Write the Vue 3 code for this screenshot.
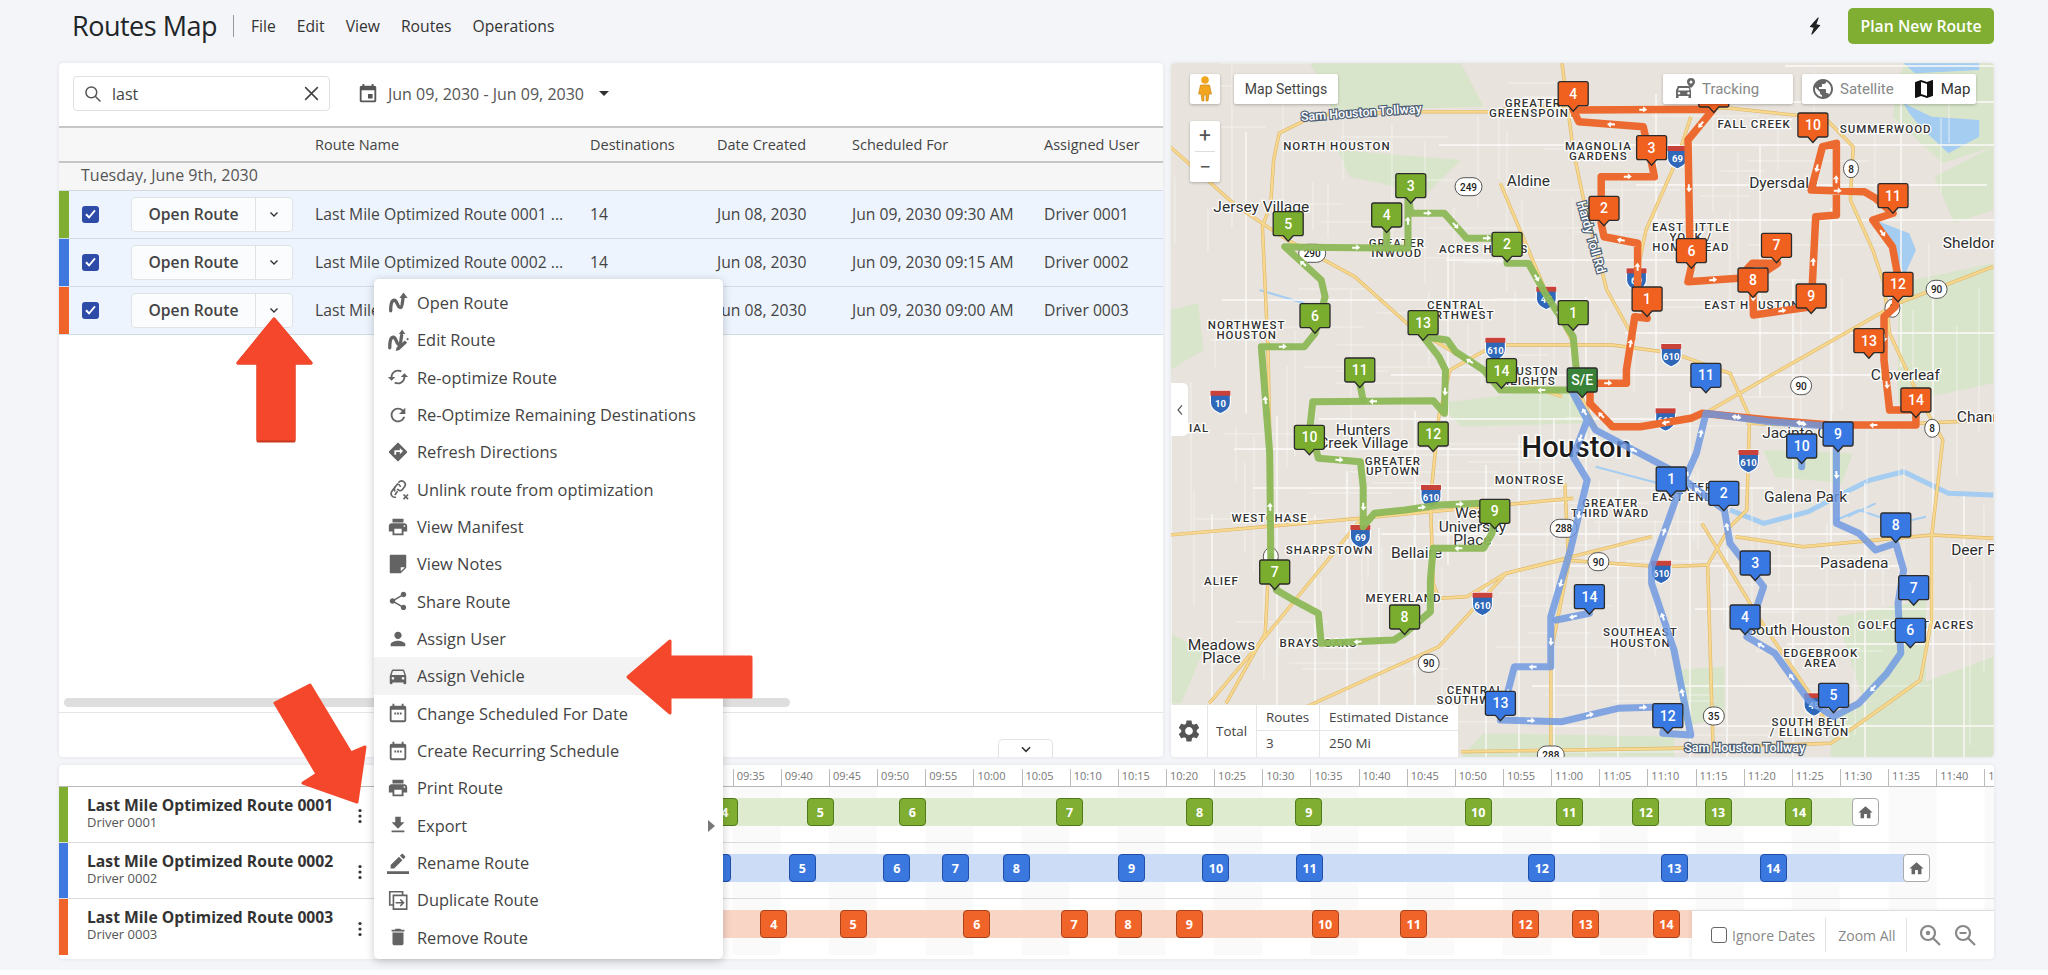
<script setup>
const P = (x, y) => [+(x * 0.56 - 1).toFixed(1), +(y / 3 - 13).toFixed(1)];
const line = (pts) => pts.map(([x, y]) => P(x, y).join(',')).join(' ');

let seed = 4711;
const rnd = () => (seed = (seed * 16807) % 2147483647) / 2147483647;
const streetPath = (n, w, h, vertical, minLen, extra) => {
  let d = '';
  for (let i = 0; i < n; i++) {
    const a = (i / n) * w + rnd() * 10;
    const b = rnd() * h * 0.75;
    const l = minLen + rnd() * extra;
    d += vertical ? `M${a.toFixed(0)} ${b.toFixed(0)}V${(b + l).toFixed(0)}` : `M${b.toFixed(0)} ${a.toFixed(0)}H${(b + l).toFixed(0)}`;
  }
  return d;
};
const majorStreets = streetPath(24, 823, 694, true, 220, 380) + streetPath(18, 694, 823, false, 220, 420);
const minorStreets = streetPath(80, 823, 694, true, 40, 130) + streetPath(70, 694, 823, false, 40, 150);

const highways = [
  [[185,330],[195,250],[260,195],[440,185],[575,185],[620,170],[720,175],[1000,175],[1170,205],[1220,290],[1215,450],[1255,600],[1275,700],[1285,850],[1340,1050],[1380,1170],[1360,1460],[1360,1710],[1340,1890],[1240,2010],[1180,2080],[900,2095],[520,2105]],
  [[185,330],[180,460],[165,530],[175,900],[180,1300],[175,1590],[170,1750],[100,1960]],
  [[700,40],[720,300],[740,460],[780,720],[830,870]],
  [[590,400],[670,720],[720,880],[735,1040],[760,1140]],
  [[0,290],[120,470],[210,570],[330,680],[430,830],[560,960],[700,1040]],
  [[0,1455],[340,1405],[720,1345]],
  [[1030,1120],[1200,1130],[1470,1110]],
  [[500,960],[580,885],[790,885],[900,910],[1000,970],[1035,1100],[1030,1380],[1000,1430],[960,1545],[880,1550],[700,1530],[600,1570],[530,1640],[480,1645],[470,1600],[465,1350],[480,1100],[500,960]],
  [[340,1410],[180,1740],[70,1960]],
  [[705,1300],[712,1540],[680,1810],[680,2110]],
  [[950,1420],[1050,1700],[1150,1950],[1175,2030]],
  [[960,1540],[970,2110]],
  [[860,1460],[600,1570],[480,1790],[270,1950],[180,2020]],
  [[930,200],[905,330],[850,540],[830,700]],
  [[1010,1460],[1130,1490],[1360,1455],[1470,1465]],
  [[1470,650],[1300,760],[1100,950],[960,1085]],
];

const parks = [
  [[0,780],[50,760],[60,900],[0,960]],
  [[1365,380],[1470,290],[1470,480],[1400,520]],
  [[1310,40],[1470,40],[1470,290],[1380,340],[1290,200]],
  [[1190,1700],[1350,1650],[1350,1900],[1240,1960]],
  [[1180,2000],[1470,1820],[1470,2120],[1180,2120]],
  [[250,40],[520,40],[560,170],[290,180]],
  [[0,1750],[60,1800],[20,1960],[0,1960]],
  [[560,2050],[900,2060],[900,2120],[520,2120]],
  [[900,1860],[990,1850],[990,2000],[920,2030]],
  [[1060,1200],[1220,1210],[1200,1300],[1080,1280]],
  [[480,1060],[720,1010],[740,1120],[520,1130]],
  [[300,300],[520,330],[460,430],[320,380]],
  [[1300,700],[1470,640],[1470,1000],[1300,1060]],
];
const waters = [
  [[1310,40],[1445,40],[1445,60],[1330,70]],
  [[1310,160],[1360,200],[1445,210],[1445,260],[1390,310],[1365,270],[1345,240],[1320,190]],
  [[1258,510],[1320,550],[1332,600],[1312,675],[1290,600]],
];
const channel = [[1000,1380],[1060,1420],[1140,1385],[1190,1340],[1250,1290],[1310,1265],[1390,1330],[1470,1335]];
const creeks = [
  [[1190,1410],[1230,1380],[1300,1420],[1350,1400]],
  [[160,720],[240,760]],
  [[760,1250],[850,1290],[920,1320]],
  [[1210,1400],[1260,1360]],
];

const color = { o: '#f0601f', g: '#7aac2e', b: '#3878e2', d: '#3a8238' };
const mk = (c, list) => list.map(([t, x, y]) => { const [a, b] = P(x, y); return { t: String(t), x: a, y: b, f: color[c] }; });
const markers = [
  ...mk('o', [[5,971,135],[4,720,131],[3,860,293],[2,775,475],[1,852,747],[6,931,602],[7,1083,586],[8,1041,690],[9,1145,738],[10,1148,225],[11,1291,437],[12,1300,703],[13,1248,872],[14,1332,1050]]),
  ...mk('g', [[3,430,407],[4,387,495],[5,211,521],[2,602,583],[1,720,788],[6,259,797],[13,452,818],[14,592,962],[11,339,960],[10,249,1162],[12,470,1152],[9,580,1384],[7,187,1566],[8,419,1701]]),
  ...mk('b', [[11,957,976],[9,1193,1152],[10,1128,1188],[1,895,1287],[2,989,1330],[8,1296,1425],[3,1045,1539],[7,1328,1613],[4,1027,1701],[6,1322,1741],[14,749,1640],[5,1185,1936],[12,889,1997],[13,590,1960]]),
  ...mk('d', [['S/E',736,990]]),
];

const routeData = [
  { c: '#8cb856', w: 7, o: 0.95, segs: [
    [[736,1020],[590,1020],[560,960],[510,905],[495,870],[452,860],[480,920],[492,960],[490,1090],[470,1052],[255,1055],[250,1130],[265,1225],[340,1235],[345,1310],[345,1430],[365,1390],[420,1380],[480,1365],[555,1360],[580,1400],[575,1450],[560,1495],[470,1495],[465,1590],[465,1685],[419,1750],[400,1770],[270,1780],[265,1690],[215,1645],[190,1620],[180,1530],[178,1210],[163,890],[240,890],[259,850],[277,740],[270,690],[205,590],[240,592],[425,595],[425,430],[430,490],[490,490],[530,565],[602,565],[602,640],[640,640],[670,730],[720,860],[725,950],[736,1020]],
    [[339,1000],[345,1052]],[[387,545],[387,595]],
  ] },
  { c: '#ec6a2f', w: 7.5, o: 1, segs: [
    [[750,1060],[750,1000],[815,1000],[815,960],[830,800],[852,805],[835,720],[835,580],[775,560],[770,520],[770,380],[865,380],[860,340],[845,230],[730,215],[720,180],[970,178],[925,270],[928,560],[931,650],[925,695],[1015,685],[1040,640],[1085,640],[1040,690],[1042,795],[1145,770],[1153,500],[1190,495],[1190,280],[1165,290],[1145,420],[1240,425],[1260,445],[1291,490],[1255,510],[1290,590],[1300,680],[1295,770],[1275,800],[1275,930],[1285,1080],[1332,1080],[1332,1125],[1180,1125],[1070,1110],[950,1090],[930,1105],[840,1130],[790,1130],[750,1060]],
  ] },
  { c: '#6b97e2', w: 7, o: 0.82, segs: [
    [[720,1030],[745,1110],[720,1220],[745,1290],[715,1500],[680,1700],[680,1850],[615,1850],[590,2010],[700,2015],[800,1975],[890,1970],[880,2050],[930,2055],[900,1800],[860,1600],[860,1550],[905,1340],[940,1210],[957,1090],[1070,1115],[1190,1130],[1190,1420],[1230,1450],[1260,1500],[1296,1480],[1310,1560],[1300,1660],[1305,1810],[1280,1870],[1230,1960],[1185,2000],[1140,1950],[1080,1810],[1030,1760],[1060,1610],[1000,1480],[990,1380],[895,1260],[760,1140],[720,1030]],
    [[749,1690],[690,1710]],[[1128,1190],[1128,1250]],
  ] },
];
const routes = routeData.flatMap((r) => r.segs.map((s) => ({ c: r.c, w: r.w, o: r.o, pts: line(s) })));
const routeArrows = routeData.flatMap((r) => r.segs.flatMap((s) => {
  const out = [];
  for (let i = 0; i < s.length - 1; i++) {
    const [ax, ay] = P(...s[i]);
    const [bx, by] = P(...s[i + 1]);
    if (Math.hypot(bx - ax, by - ay) > 32) out.push({ x: (ax + bx) / 2, y: (ay + by) / 2, a: (Math.atan2(by - ay, bx - ax) * 180) / Math.PI });
  }
  return out;
}));

const placeLabel = (t, x, y, a) => { const [m, n] = P(x, y); return { t, x: m, y: n + 5, a: a || 'middle' }; };
const places = [
  ['Jersey Village',163,470],['Aldine',640,392],['Dyersdale',1095,398],['Sheldon',1430,580],['Channelview',1405,1100,'start'],['Cloverleaf',1313,975],
  ['Hunters',345,1140],['Creek Village',345,1180],['Meadows',92,1785],['Place',92,1825],['Bellaire',440,1510],['West',540,1390],['University',540,1430],['Place',540,1470],
  ['Galena Park',1135,1340],['Pasadena',1222,1540],['South Houston',1122,1740],['Deer Park',1395,1500,'start'],['Jacinto City',1130,1148],
].map((p) => placeLabel(...p));
const areas = [
  ['NORTH HOUSTON',298,289],['GREATER',648,160],['GREENSPOINT',648,190],['MAGNOLIA',765,287],['GARDENS',765,317],['FALL CREEK',1043,222],['SUMMERWOOD',1278,237],
  ['GREATER',405,578],['INWOOD',405,608],['ACRES HOMES',560,598],['EAST LITTLE',930,530],['YORK /',930,560],['HOMESTEAD',930,590],['NORTHWEST',137,825],['HOUSTON',137,855],
  ['CENTRAL',510,766],['NORTHWEST',510,796],['EAST HOUSTON',1040,765],['HOUSTON',640,962],['HEIGHTS',640,992],['GREATER',398,1232],['UPTOWN',398,1262],['MONTROSE',642,1289],
  ['WESTCHASE',178,1405],['SHARPSTOWN',285,1500],['ALIEF',92,1593],['MEYERLAND',417,1645],['BRAYS OAKS',265,1780],['GREATER',786,1358],['THIRD WARD',786,1388],
  ['SOUTHEAST',840,1747],['HOUSTON',840,1778],['GREATER',920,1310],['EAST END',915,1340],['EDGEBROOK',1162,1810],['AREA',1162,1840],['GOLFCREST ACRES',1332,1725],
  ['CENTRAL',545,1919],['SOUTHWEST',545,1949],['SOUTH BELT',1142,2015],['/ ELLINGTON',1142,2045],['MEMORIAL',10,1135],
].map((p) => { const l = placeLabel(...p); return { ...l, y: l.y - 1 }; });
const [hx, hy] = P(726, 1222);
const [t1x, t1y] = P(342, 200);
const [t2x, t2y] = P(1026, 2105);
const [hrx, hry] = P(745, 565);

const interstates = [[69,906,318],[45,672,740],[610,581,893],[610,895,912],[10,90,1052],[610,466,1335],[69,340,1455],[610,558,1658],[610,877,1562],[610,1033,1230],[45,1150,1960],[610,885,1105],[69,833,685]]
  .map(([t, x, y]) => { const [a, b] = P(x, y); return { t, x: a, y: b }; });
const shields = [[290,254,610],[249,533,410],[90,1369,718],[90,1127,1007],[8,1216,356],[8,1361,1135],[288,703,1435],[90,765,1535],[90,462,1840],[35,971,1998],[288,680,2115],[8,180,1520],[8,1290,775]]
  .map(([t, x, y]) => { const [a, b] = P(x, y); return { t: String(t), x: a, y: b, w: String(t).length * 6 + 9 }; });

const columns = ['Route Name', 'Destinations', 'Date Created', 'Scheduled For', 'Assigned User'];
const rows = [
  { c: '#7fae33', n: 'Last Mile Optimized Route 0001 ...', s: 'Jun 09, 2030 09:30 AM', u: 'Driver 0001' },
  { c: '#3f79e0', n: 'Last Mile Optimized Route 0002 ...', s: 'Jun 09, 2030 09:15 AM', u: 'Driver 0002' },
  { c: '#f0642a', n: 'Last Mile Optimized Route 0003 ...', s: 'Jun 09, 2030 09:00 AM', u: 'Driver 0003' },
];

const print = 'M19 8H5c-1.66 0-3 1.34-3 3v6h4v4h12v-4h4v-6c0-1.66-1.34-3-3-3zm-3 11H8v-5h8v5zm3-7c-.55 0-1-.45-1-1s.45-1 1-1 1 .45 1 1-.45 1-1 1zm-1-9H6v4h12V3z';
const cal = 'M5 4h1V2h2v2h8V2h2v2h1c1.1 0 2 .9 2 2v14c0 1.1-.9 2-2 2H5c-1.1 0-2-.9-2-2V6c0-1.1.9-2 2-2zm0 4.500v11.500h14V8.500H5zm3 3h2v2H8zm3 0h2v2h-2zm3 0h2v2h-2z';
const squiggleA = 'M4 20.500C4 13 5 9 8 9c3 0 3.500 8 6.500 8C17 17 16.500 11 17.500 7';
const squiggleB = 'M3 20.500C3 13 4 9 7 9c3 0 3.500 8 6 8C15.500 17 15 11 16 7';
const menu = [
  { t: 'Open Route', s: squiggleA, d: 'M18 .5l4.500 6h-9z' },
  { t: 'Edit Route', s: squiggleB, d: 'M16.500 .5l3.500 5h-7zM22.500 9.500l1.500 1.500-1.500 1.500-1.500-1.500zM19.500 12.500l2.500 2.500-8.500 8-4 1 1-4z' },
  { t: 'Re-optimize Route', d: 'M19 8l-4 4h3c0 3.310-2.690 6-6 6-1.010 0-1.970-.25-2.800-.7l-1.460 1.460C8.970 19.540 10.430 20 12 20c4.420 0 8-3.580 8-8h3l-4-4zM6 12c0-3.310 2.690-6 6-6 1.010 0 1.970.25 2.800.7l1.460-1.460C15.030 4.460 13.570 4 12 4c-4.420 0-8 3.580-8 8H1l4 4 4-4H6z' },
  { t: 'Re-Optimize Remaining Destinations', d: 'M17.65 6.35C16.2 4.9 14.21 4 12 4c-4.42 0-7.99 3.58-7.99 8s3.57 8 7.99 8c3.73 0 6.84-2.55 7.73-6h-2.08c-.82 2.33-3.04 4-5.65 4-3.31 0-6-2.69-6-6s2.69-6 6-6c1.66 0 3.14.69 4.22 1.78L13 11h7V4l-2.35 2.35z' },
  { t: 'Refresh Directions', d: 'M21.71 11.29l-9-9c-.39-.39-1.02-.39-1.41 0l-9 9c-.39.39-.39 1.02 0 1.41l9 9c.39.39 1.02.39 1.41 0l9-9c.39-.38.39-1.01 0-1.41zM14 14.5V12h-4v3H8v-4c0-.55.45-1 1-1h5V7.5l3.500 3.500-3.500 3.500z' },
  { t: 'Unlink route from optimization', s: 'M9 21a4 4 0 0 1-4-6l2.500-3.500M9 18l2-3M13 4.500a4 4 0 0 1 6.500 4.500l-3 4a4 4 0 0 1-5-.5M8.500 14a4 4 0 0 1 1-5l2-2.500a4 4 0 0 1 3 2.500', x: 'M18 18l5 5M23 18l-5 5' },
  { t: 'View Manifest', d: print },
  { t: 'View Notes', d: 'M4 2h16a1 1 0 0 1 1 1v13l-6 6H4a1 1 0 0 1-1-1V3a1 1 0 0 1 1-1zM15 20v-4.500h4.500z' },
  { t: 'Share Route', d: 'M18 16.08c-.76 0-1.44.3-1.96.77L8.91 12.7c.05-.23.09-.46.09-.7s-.04-.47-.09-.7l7.05-4.11c.54.5 1.25.81 2.04.81 1.66 0 3-1.34 3-3s-1.34-3-3-3-3 1.34-3 3c0 .24.04.47.09.7L8.04 9.81C7.5 9.31 6.79 9 6 9c-1.66 0-3 1.34-3 3s1.34 3 3 3c.79 0 1.5-.31 2.04-.81l7.12 4.16c-.05.21-.08.43-.08.65 0 1.61 1.31 2.92 2.92 2.92 1.61 0 2.92-1.31 2.92-2.92s-1.31-2.92-2.92-2.92z' },
  { t: 'Assign User', d: 'M12 12c2.21 0 4-1.79 4-4s-1.79-4-4-4-4 1.79-4 4 1.79 4 4 4zm0 2c-2.67 0-8 1.34-8 4v2h16v-2c0-2.66-5.33-4-8-4z' },
  { t: 'Assign Vehicle', d: 'M18.92 6.010C18.72 5.42 18.16 5 17.5 5h-11c-.66 0-1.21.42-1.42 1.010L3 12v8c0 .55.45 1 1 1h1c.55 0 1-.45 1-1v-1h12v1c0 .55.45 1 1 1h1c.55 0 1-.45 1-1v-8l-2.08-5.990zM6.500 16c-.83 0-1.500-.67-1.500-1.500S5.670 13 6.500 13s1.500.67 1.500 1.500S7.330 16 6.500 16zm11 0c-.83 0-1.500-.67-1.500-1.500s.67-1.500 1.500-1.500 1.500.67 1.500 1.500-.67 1.500-1.500 1.500zM5 11l1.500-4.500h11L19 11H5z', hover: true },
  { t: 'Change Scheduled For Date', d: cal },
  { t: 'Create Recurring Schedule', d: cal },
  { t: 'Print Route', d: print },
  { t: 'Export', d: 'M19 9h-4V3H9v6H5l7 7 7-7zM5 18v2h14v-2H5z', sub: true },
  { t: 'Rename Route', d: 'M24 24H0v-3h24v3zM13.060 5.190l3.750 3.750L7.750 18H4v-3.750l9.060-9.060zm4.820 2.680l-3.750-3.750 1.830-1.830c.39-.39 1.020-.39 1.410 0l2.340 2.340c.39.39.39 1.020 0 1.410l-1.830 1.830z' },
  { t: 'Duplicate Route', s: 'M6 17.500H3V3h14v3M7 7h14.500v15H7zM10 15h8M15 12l3 3-3 3' },
  { t: 'Remove Route', d: 'M6 19c0 1.100.9 2 2 2h8c1.100 0 2-.9 2-2V7H6v12zM19 4h-3.500l-1-1h-5l-1 1H5v2h14V4z' },
];

const ticks = [];
for (let h = 9, m = 35; ticks.length < 27; m += 5) {
  if (m === 60) { h += 1; m = 0; }
  ticks.push(`${String(h).padStart(2, '0')}:${String(m).padStart(2, '0')}`);
}
const toLeft = (z) => +(700 + z / 1.163 - 374 - 13.5).toFixed(1);
const tlRow = (name, driver, strip, bar, chip, edge, end, chips, home) => ({
  name, driver, strip, bar, chip, edge,
  barW: +(700 + end / 1.163 - 374).toFixed(1),
  chips: chips.map(([t, z]) => ({ t, x: toLeft(z) })),
  home: home ? toLeft(home) : null,
});
const tlRows = [
  tlRow('Last Mile Optimized Route 0001', 'Driver 0001', '#7fae33', '#dfebce', '#7fae33', '#4f7a1c', 1355,
    [[4,29],[5,140],[6,247],[7,430],[8,581],[9,708],[10,905],[11,1011],[12,1100],[13,1184],[14,1278]], 1355),
  tlRow('Last Mile Optimized Route 0002', 'Driver 0002', '#3f79e0', '#ccdcf6', '#3a78e0', '#1e4fa8', 1415,
    [[4,20],[5,119],[6,229],[7,297],[8,368],[9,502],[10,600],[11,709],[12,979],[13,1133],[14,1248]], 1415),
  tlRow('Last Mile Optimized Route 0003', 'Driver 0003', '#f0642a', '#f9d5c5', '#f0642a', '#a8431a', 1170,
    [[4,86],[5,178],[6,322],[7,435],[8,498],[9,569],[10,727],[11,830],[12,960],[13,1030],[14,1124]], null),
];
</script>

<template>
  <div class="page">
    <header class="topbar">
      <h1 class="title">Routes Map</h1>
      <span class="title-sep"></span>
      <nav class="nav">
        <span>File</span><span>Edit</span><span>View</span><span>Routes</span><span>Operations</span>
      </nav>
      <span class="grow"></span>
      <svg class="bolt" viewBox="0 0 24 24"><path d="M11 21h-1l1-7H7.500c-.58 0-.57-.32-.38-.66.19-.34.05-.08.07-.12C8.480 10.940 10.420 7.540 13 3h1l-1 7h3.500c.49 0 .56.33.47.51l-.07.15C12.960 17.550 11 21 11 21z"/></svg>
      <button class="plan">Plan New Route</button>
    </header>

    <div class="main">
      <section class="list card">
        <div class="toolbar">
          <div class="search">
            <svg class="search-ico" viewBox="0 0 24 24"><circle cx="10" cy="10" r="6.500"/><path d="M15 15l6 6"/></svg>
            <span class="search-text">last</span>
            <svg class="search-x" viewBox="0 0 24 24"><path d="M4 4l16 16M20 4L4 20"/></svg>
          </div>
          <div class="range">
            <svg class="cal" viewBox="0 0 24 24"><path fill-rule="evenodd" d="M17 12h-5v5h5v-5zM16 1v2H8V1H6v2H5c-1.110 0-1.990.9-1.990 2L3 19c0 1.100.89 2 2 2h14c1.100 0 2-.9 2-2V5c0-1.100-.9-2-2-2h-1V1h-2zm3 18H5V8h14v11z"/></svg>
            <span>Jun 09, 2030 - Jun 09, 2030</span>
            <i class="caret"></i>
          </div>
        </div>

        <div class="grid head">
          <span></span><span></span><span></span>
          <span v-for="c in columns" :key="c">{{ c }}</span>
        </div>
        <div class="group">Tuesday, June 9th, 2030</div>

        <div v-for="r in rows" :key="r.n" class="grid row">
          <span class="strip" :style="{ background: r.c }"></span>
          <span class="check">
            <svg viewBox="0 0 16 18"><path d="M6.500 13.500L2.500 9.500l1.500-1.500 2.500 2.500 5.500-6.500 1.500 1.400z"/></svg>
          </span>
          <div class="split">
            <span class="split-main">Open Route</span>
            <span class="split-caret"><svg viewBox="0 0 12 12"><path d="M2.500 4.500L6 8l3.500-3.500"/></svg></span>
          </div>
          <span>{{ r.n }}</span><span>14</span><span>Jun 08, 2030</span><span>{{ r.s }}</span><span>{{ r.u }}</span>
        </div>

        <div class="grow"></div>
        <div class="scrollbar"></div>
        <div class="list-foot">
          <span class="foot-tab"><svg viewBox="0 0 12 12"><path d="M2.500 4.500L6 8l3.500-3.500"/></svg></span>
        </div>
      </section>

      <section class="map card">
        <svg class="map-svg" viewBox="0 0 823 694" width="823" height="694">
          <rect width="823" height="694" fill="#e8e3dc"/>
          <polygon v-for="(p, i) in parks" :key="'pk' + i" :points="line(p)" fill="#d9e5cb"/>
          <polygon v-for="(p, i) in waters" :key="'w' + i" :points="line(p)" fill="#a5cdf2"/>
          <polyline :points="line(channel)" fill="none" stroke="#a5cdf2" stroke-width="5"/>
          <polyline v-for="(p, i) in creeks" :key="'cr' + i" :points="line(p)" fill="none" stroke="#a5cdf2" stroke-width="2"/>
          <path :d="minorStreets" stroke="#f6f4f0" stroke-width="0.8" fill="none"/>
          <path :d="majorStreets" stroke="#fbfaf8" stroke-width="1.400" fill="none"/>
          <polyline v-for="(p, i) in highways" :key="'he' + i" :points="line(p)" fill="none" stroke="#e0b768" stroke-width="3.400" stroke-linejoin="round"/>
          <polyline v-for="(p, i) in highways" :key="'h' + i" :points="line(p)" fill="none" stroke="#f6d88f" stroke-width="2.200" stroke-linejoin="round"/>

          <text v-for="(l, i) in areas" :key="'a' + i" class="area" :x="l.x" :y="l.y" text-anchor="middle">{{ l.t }}</text>
          <text v-for="(l, i) in places" :key="'p' + i" class="place" :x="l.x" :y="l.y" :text-anchor="l.a">{{ l.t }}</text>
          <text class="city" :x="hx" :y="hy" text-anchor="middle">Houston</text>
          <text class="toll" :transform="`translate(${t1x} ${t1y}) rotate(-4)`" text-anchor="middle">Sam Houston Tollway</text>
          <text class="toll" :transform="`translate(${t2x} ${t2y})`" text-anchor="middle">Sam Houston Tollway</text>
          <text class="toll" :transform="`translate(${hrx} ${hry}) rotate(74)`" text-anchor="middle">Hardy Toll Rd</text>

          <g v-for="(s, i) in interstates" :key="'i' + i" :transform="`translate(${s.x} ${s.y})`">
            <path d="M-10-10h20v12c0 6-5 9-10 11-5-2-10-5-10-11z" fill="#2f68b8" stroke="#fff" stroke-width="1.200"/>
            <path d="M-10-10h20v5h-20z" fill="#c8423a"/>
            <text class="ishield" y="6" text-anchor="middle">{{ s.t }}</text>
          </g>
          <g v-for="(s, i) in shields" :key="'s' + i" :transform="`translate(${s.x} ${s.y})`">
            <rect :x="-s.w / 2" y="-9" :width="s.w" height="18" rx="9" fill="#fff" stroke="#555" stroke-width="1"/>
            <text class="sshield" y="4" text-anchor="middle">{{ s.t }}</text>
          </g>

          <polyline v-for="(r, i) in routes" :key="'r' + i" :points="r.pts" fill="none" :stroke="r.c" :stroke-width="r.w" :opacity="r.o" stroke-linejoin="round" stroke-linecap="round"/>
          <path v-for="(a, i) in routeArrows" :key="'ra' + i" :transform="`translate(${a.x} ${a.y}) rotate(${a.a})`" d="M-4-1h4v-2.500L4 0 0 2.500V1h-4z" fill="#fff"/>

          <g v-for="(m, i) in markers" :key="'m' + i" :transform="`translate(${m.x} ${m.y})`">
            <path d="M-13-12h26a2 2 0 0 1 2 2v20a2 2 0 0 1-2 2H5l-5 5.500L-5 12h-8a2 2 0 0 1-2-2v-20a2 2 0 0 1 2-2z" :fill="m.f" stroke="#2b2b2b" stroke-width="1.300"/>
            <text class="mtext" y="5" text-anchor="middle">{{ m.t }}</text>
          </g>
        </svg>

        <div class="mctl peg">
          <svg viewBox="0 0 16 28" width="16" height="28"><circle cx="8" cy="5" r="3.800" fill="#f2a51f"/><path d="M3.500 10h9l2 9h-2.500L11 26H9v-6H7v6H5l-1-7H1.500z" fill="#f2a51f" stroke="#c47d14" stroke-width=".6"/></svg>
        </div>
        <div class="mctl settings">Map Settings</div>
        <div class="mctl zoomctl">
          <span>+</span><i></i><span>−</span>
        </div>
        <div class="mctl tracking">
          <svg viewBox="0 0 24 24" width="24" height="24"><path fill="#666" fill-rule="evenodd" d="M17.500 9l1.500 4.500V21h-2.500v-2h-10v2H4v-7.500L5.800 9zM7 11l-1 2.500h11.500l-.8-2.500zM7 15a1.300 1.300 0 1 0 0 2.600A1.300 1.300 0 0 0 7 15zm9.500 0a1.300 1.300 0 1 0 0 2.600 1.300 1.300 0 0 0 0-2.600zM19 1a4 4 0 0 1 4 4c0 2.500-4 6-4 6s-4-3.500-4-6a4 4 0 0 1 4-4zm0 2.500a1.500 1.500 0 1 0 0 3 1.500 1.500 0 0 0 0-3z"/></svg>
          <span>Tracking</span>
        </div>
        <div class="mctl maptype">
          <svg viewBox="0 0 24 24" width="24" height="24"><path fill="#666" fill-rule="evenodd" d="M12 2C6.480 2 2 6.480 2 12s4.480 10 10 10 10-4.480 10-10S17.520 2 12 2zm-1 17.930c-3.950-.49-7-3.850-7-7.930 0-.62.08-1.210.21-1.790L9 15v1c0 1.100.9 2 2 2v1.930zm6.900-2.540c-.26-.81-1-1.390-1.900-1.390h-1v-3c0-.55-.45-1-1-1H8v-2h2c.55 0 1-.45 1-1V7h2c1.100 0 2-.9 2-2v-.41c2.930 1.190 5 4.060 5 7.410 0 2.080-.8 3.970-2.100 5.390z"/></svg>
          <span class="sat">Satellite</span>
          <svg class="map-ico" viewBox="0 0 24 24" width="24" height="24"><path fill="#111" fill-rule="evenodd" d="M20.500 3l-.16.03L15 5.100 9 3 3.360 4.900c-.21.07-.36.25-.36.48V20.500c0 .28.22.5.5.5l.16-.03L9 18.900l6 2.100 5.640-1.900c.21-.07.36-.25.36-.48V3.500c0-.28-.22-.5-.5-.5zM15 19l-6-2.110V5l6 2.110V19z"/></svg>
          <span>Map</span>
        </div>
        <div class="collapse">
          <svg viewBox="0 0 12 20" width="8" height="14"><path d="M9 3l-6 7 6 7" fill="none" stroke="#555" stroke-width="1.800"/></svg>
        </div>
        <div class="totals">
          <div class="t-gear"><svg viewBox="0 0 24 24" width="26" height="26"><path fill="#555" fill-rule="evenodd" d="M19.140 12.940c.04-.3.06-.61.06-.94 0-.32-.02-.64-.07-.94l2.030-1.580c.18-.14.23-.41.12-.61l-1.920-3.320c-.12-.22-.37-.29-.59-.22l-2.390.96c-.5-.38-1.030-.7-1.620-.94l-.36-2.540c-.04-.24-.24-.41-.48-.41h-3.840c-.24 0-.43.17-.47.41l-.36 2.540c-.59.24-1.130.57-1.620.94l-2.390-.96c-.22-.08-.47 0-.59.22L2.740 8.870c-.12.21-.08.47.12.61l2.030 1.580c-.05.3-.09.63-.09.94s.02.64.07.94l-2.030 1.580c-.18.14-.23.41-.12.61l1.920 3.320c.12.22.37.29.59.22l2.390-.96c.5.38 1.030.7 1.620.94l.36 2.540c.05.24.24.41.48.41h3.840c.24 0 .44-.17.47-.41l.36-2.540c.59-.24 1.130-.56 1.620-.94l2.390.96c.22.08.47 0 .59-.22l1.920-3.320c.12-.22.07-.47-.12-.61l-2.010-1.580zM12 15.600c-1.980 0-3.600-1.620-3.600-3.600s1.620-3.600 3.600-3.600 3.600 1.620 3.600 3.600-1.620 3.600-3.600 3.600z"/></svg></div>
          <div class="t-total">Total</div>
          <div class="t-col"><span>Routes</span><span>3</span></div>
          <div class="t-col wide"><span>Estimated Distance</span><span>250 Mi</span></div>
        </div>
      </section>
    </div>

    <section class="bottom card">
      <div class="names">
        <div class="names-head"></div>
        <div v-for="r in tlRows" :key="r.name" class="name-row">
          <span class="strip" :style="{ background: r.strip }"></span>
          <div class="name-text">
            <strong>{{ r.name }}</strong>
            <small>{{ r.driver }}</small>
          </div>
          <svg class="kebab" viewBox="0 0 6 18" width="6" height="18"><circle cx="3" cy="3.500" r="1.600"/><circle cx="3" cy="9" r="1.600"/><circle cx="3" cy="14.500" r="1.600"/></svg>
        </div>
      </div>
      <div class="timeline">
        <div class="ticks">
          <span v-for="t in ticks" :key="t" class="tick">{{ t }}</span>
        </div>
        <div v-for="r in tlRows" :key="r.name" class="tl-row">
          <div class="tl-bar" :style="{ width: r.barW + 'px', background: r.bar }"></div>
          <span v-for="c in r.chips" :key="c.t" class="chip" :style="{ left: c.x + 'px', background: r.chip, borderColor: r.edge }">{{ c.t }}</span>
          <span v-if="r.home !== null" class="chip home" :style="{ left: r.home + 'px' }">
            <svg viewBox="0 0 24 24" width="17" height="17"><path d="M10 20v-6h4v6h5v-8h3L12 3 2 12h3v8z" fill="#666"/></svg>
          </span>
        </div>
      </div>
      <div class="zoombox">
        <span class="zb-check"></span>
        <span class="zb-label">Ignore Dates</span>
        <i></i>
        <span class="zb-all">Zoom All</span>
        <i></i>
        <svg viewBox="0 0 24 24" width="24" height="24"><circle cx="10" cy="10" r="7"/><path d="M15 15l7 7"/><circle cx="10" cy="10" r="2.200" class="fill"/></svg>
        <svg viewBox="0 0 24 24" width="24" height="24"><circle cx="10" cy="10" r="7"/><path d="M15 15l7 7M6.500 10h7"/></svg>
      </div>
    </section>

    <div class="ctx">
      <div v-for="m in menu" :key="m.t" class="ctx-item" :class="{ hover: m.hover }">
        <svg class="ctx-ico" viewBox="0 0 24 24">
          <path v-if="m.d" :d="m.d" fill="#636363" fill-rule="evenodd"/>
          <path v-if="m.s" :d="m.s" fill="none" stroke="#636363" stroke-linecap="round" :stroke-width="m.t === 'Open Route' || m.t === 'Edit Route' ? 3.600 : 1.800"/>
          <path v-if="m.x" :d="m.x" fill="none" stroke="#636363" stroke-width="1.800"/>
        </svg>
        <span>{{ m.t }}</span>
        <i v-if="m.sub" class="ctx-sub"></i>
      </div>
    </div>

    <svg class="arrows" viewBox="0 0 2048 975" width="2048" height="975">
      <g fill="#f4472b" stroke="#f4472b" stroke-width="3" stroke-linejoin="round">
        <polygon class="a-shadow" points="274,319 311,363 294,363 294,441 258,441 258,363 238,363" />
        <polygon points="274,319 311,363 294,363 294,439 258,439 258,363 238,363" />
        <polygon points="628,677 670,641 670,657 751,657 751,697 670,697 670,713" />
        <polygon points="275,703 310,685 351,753 365,747 357,802 303,783 317,774" />
      </g>
    </svg>
  </div>
</template>

<style>
html, body { margin: 0; background: #fff; }
</style>

<style scoped>
* { box-sizing: border-box; }
.page {
  position: relative;
  width: 2048px;
  height: 970px;
  overflow: hidden;
  padding: 0 54px 0 59px;
  background: #f4f5f8;
  font-family: "Open Sans", "Liberation Sans", sans-serif;
  color: #444;
}
.grow { flex: 1; }
.card { background: #fff; border-radius: 4px; box-shadow: 0 0 4px rgba(0, 0, 0, .08); }

.topbar { display: flex; align-items: center; height: 63px; padding-left: 13px; padding-bottom: 12px; }
.title { margin: 0; font-size: 27px; font-weight: 400; color: #212529; letter-spacing: -.5px; }
.title-sep { width: 1px; height: 22px; margin: 0 17px 0 16px; background: #999; }
.nav { display: flex; gap: 21px; font-size: 15.700px; color: #333; }
.bolt { width: 24px; height: 24px; margin-right: 21px; fill: #222; transform: rotate(12deg); }
.plan {
  width: 146px; height: 36px; border: 0; border-radius: 5px; padding: 0; margin-top: 1px;
  background: #7fae33; color: #fff; font: 600 15.800px "Open Sans", sans-serif;
}

.main { display: flex; gap: 8px; height: 694px; }
.list { width: 1104px; display: flex; flex-direction: column; overflow: hidden; }
.toolbar { display: flex; align-items: center; gap: 27px; height: 63px; padding: 0 0 2px 14px; flex: none; }
.search {
  display: flex; align-items: center; width: 257px; height: 35px; padding: 0 8px 0 9px;
  border: 1px solid #dde0e4; border-radius: 4px; font-size: 16px; color: #444;
}
.search-ico { width: 20px; height: 20px; fill: none; stroke: #555; stroke-width: 1.800; }
.search-text { flex: 1; margin-left: 9px; }
.search-x { width: 19px; height: 19px; fill: none; stroke: #444; stroke-width: 2; }
.range { display: flex; align-items: center; font-size: 16px; color: #555; }
.cal { width: 22px; height: 22px; margin-right: 9px; fill: #555; }
.caret { margin-left: 15px; border: 5px solid transparent; border-top-color: #333; border-bottom: 0; }

.grid {
  display: grid;
  grid-template-columns: 10px 62px 184px 275px 127px 135px 192px 1fr;
  align-items: center;
  flex: none;
}
.head {
  height: 37px; padding-bottom: 1px; background: #f7f7f7; border-top: 2px solid #c6c6c6; border-bottom: 2px solid #c6c6c6;
  font-size: 14.500px; color: #444;
}
.group {
  height: 28px; flex: none; padding-left: 22px; line-height: 25px; font-size: 16px; color: #555;
  background: #f6f6f6; border-bottom: 1px solid #d3d9df;
}
.row {
  height: 48px; padding-bottom: 1px; background: #edf4fd; border-bottom: 1px solid #d3dce6; font-size: 15.700px; color: #444; white-space: nowrap;
}
.strip { display: block; width: 10px; }
.row .strip { height: 47px; margin-bottom: -1px; }
.check {
  display: block; width: 17px; height: 17px; margin-left: 13px; border-radius: 3px; background: #2d4ba7;
}
.check svg { display: block; width: 17px; height: 17px; fill: #fff; }
.split {
  display: flex; width: 162px; height: 35px; background: #fbfcfe; border: 1px solid #dfe3e8; border-radius: 4px;
  font-size: 15.700px; font-weight: 600; color: #444;
}
.split-main { width: 124px; text-align: center; line-height: 33px; border-right: 1px solid #dfe3e8; }
.split-caret { flex: 1; display: flex; align-items: center; justify-content: center; }
.split-caret svg { width: 12px; height: 12px; fill: none; stroke: #333; stroke-width: 1.400; }

.scrollbar { flex: none; width: 726px; height: 9px; margin: 0 0 5px 5px; border-radius: 5px; background: #dedede; }
.list-foot {
  flex: none; height: 45px; display: flex; align-items: flex-end; justify-content: flex-end;
  padding-right: 110px; border-top: 1px solid #e6e6e6;
}
.foot-tab {
  display: flex; align-items: center; justify-content: center; width: 55px; height: 18px;
  border: 1px solid #e2e2e2; border-bottom: 0; border-radius: 5px 5px 0 0;
}
.foot-tab svg { width: 14px; height: 14px; fill: none; stroke: #333; stroke-width: 1.300; }

.map { position: relative; width: 823px; overflow: hidden; font-family: Roboto, "Open Sans", sans-serif; }
.map-svg { display: block; }
.map-svg text { font-family: Roboto, "Liberation Sans", sans-serif; }
.area { font-size: 11.500px; font-weight: 500; letter-spacing: 1px; fill: #333; stroke: #fff; stroke-width: 2.500px; paint-order: stroke; }
.place { font-size: 15.500px; fill: #2d2d2d; stroke: #fff; stroke-width: 2.500px; paint-order: stroke; }
.city { font-size: 29px; font-weight: 500; fill: #1b1b1b; stroke: #fff; stroke-width: 3px; paint-order: stroke; }
.toll { font-size: 12.500px; font-weight: 500; fill: #fff; stroke: #4d5f77; stroke-width: 2.400px; paint-order: stroke; }
.ishield { font-size: 9.500px; font-weight: 700; fill: #fff; }
.sshield { font-size: 10px; font-weight: 500; fill: #222; }
.mtext { font-size: 14px; font-weight: 500; fill: #fff; }

.mctl {
  position: absolute; display: flex; align-items: center; background: #fff; border-radius: 2px;
  box-shadow: 0 1px 3px rgba(0, 0, 0, .25); color: #444; font-size: 14px;
}
.peg { left: 19px; top: 11px; width: 30px; height: 30px; justify-content: center; }
.settings { left: 63px; top: 11px; width: 104px; height: 30px; justify-content: center; }
.zoomctl {
  left: 19px; top: 58px; width: 30px; height: 61px; flex-direction: column; justify-content: space-around; font-size: 21px; color: #555;
}
.zoomctl span { line-height: 25px; }
.zoomctl i { width: 20px; height: 1px; background: #ddd; }
.tracking { left: 492px; top: 11px; width: 130px; height: 30px; padding-left: 9px; color: #888; font-size: 15px; gap: 6px; }
.maptype { left: 631px; top: 11px; width: 174px; height: 30px; padding-left: 9px; font-size: 15px; color: #333; gap: 5px; }
.sat { color: #888; }
.map-ico { margin-left: 13px; }
.collapse {
  position: absolute; left: 0; top: 320px; width: 17px; height: 53px; display: flex; align-items: center; justify-content: center;
  background: #fff; border-radius: 0 5px 5px 0;
}
.totals {
  position: absolute; left: 0; bottom: 0; width: 287px; height: 52px; display: flex; background: #fff;
  font-family: "Open Sans", sans-serif; font-size: 13.400px; color: #444;
}
.t-gear { width: 37px; display: flex; align-items: center; justify-content: center; border-right: 1px solid #e5e5e5; }
.t-total { width: 49px; display: flex; align-items: center; padding-left: 8px; border-right: 1px solid #e5e5e5; }
.t-col { width: 63px; display: flex; flex-direction: column; border-right: 1px solid #e5e5e5; }
.t-col span { height: 26px; line-height: 25px; padding-left: 9px; }
.t-col span:first-child { border-bottom: 1px solid #e5e5e5; }
.t-col.wide { width: 138px; border-right: 0; }

.bottom { position: relative; display: flex; height: 194px; margin-top: 8px; overflow: hidden; }
.names { width: 315px; flex: none; }
.names-head { height: 22px; border-bottom: 1px solid #b9b9b9; }
.name-row { display: flex; align-items: center; height: 56px; border-bottom: 1px solid #dcdcdc; padding-right: 11px; }
.name-row:last-child { border-bottom: 0; }
.name-row .strip { width: 9px; height: 100%; }
.name-text { flex: 1; display: flex; flex-direction: column; padding: 0 0 5px 19px; }
.name-text strong { font-size: 15.700px; font-weight: 700; color: #333; line-height: 20px; }
.name-text small { font-size: 13px; color: #555; line-height: 15px; }
.kebab { fill: #333; margin-top: 3px; }
.timeline { flex: 1; min-width: 0; overflow: hidden; }
.ticks { display: flex; height: 22px; padding-left: 358.700px; border-bottom: 1px solid #b9b9b9; overflow: hidden; }
.tick {
  flex: none; width: 48.150px; padding: 0 0 0 3px; border-left: 1px solid #bbb; margin-top: 4px;
  font-size: 11px; line-height: 13px; color: #777;
}
.tl-row {
  position: relative; height: 56px; border-bottom: 1px solid #dcdcdc;
  background: repeating-linear-gradient(90deg, #fafafa 0 48.150px, #fff 48.150px 96.300px);
  background-position: 358.700px 0;
}
.tl-row:last-child { border-bottom: 0; }
.tl-bar { position: absolute; left: 0; top: 11px; height: 28px; }
.chip {
  position: absolute; top: 11px; width: 27px; height: 28px; display: flex; align-items: center; justify-content: center;
  border: 1px solid; border-radius: 4px; color: #fff; font-size: 12.500px; font-weight: 700;
}
.home { background: #fff; border-color: #aaa; }
.zoombox {
  position: absolute; right: 0; bottom: 0; width: 302px; height: 49px; display: flex; align-items: center; gap: 10px;
  padding-left: 19px; background: #fff; border-top: 1px solid #ddd; box-shadow: -2px 0 4px rgba(0, 0, 0, .06);
  font-size: 14px; color: #888;
}
.zb-check { width: 16px; height: 16px; border: 1.500px solid #666; border-radius: 3px; margin-right: -5px; }
.zoombox i { width: 1px; height: 34px; background: #e2e2e2; }
.zb-all { margin-left: 2px; }
.zoombox svg { fill: none; stroke: #888; stroke-width: 2.200; margin-left: 1px; }
.zoombox svg .fill { fill: #888; stroke: none; }

.ctx {
  position: absolute; left: 374px; top: 279px; width: 349px; height: 680px; padding-top: 5px;
  background: #fff; border-radius: 5px; box-shadow: 0 2px 10px rgba(0, 0, 0, .22); z-index: 3;
}
.ctx-item { position: relative; display: flex; align-items: center; height: 37.330px; padding-left: 13px; font-size: 16.400px; color: #444; }
.ctx-item.hover { background: #f3f3f3; }
.ctx-ico { width: 22px; height: 22px; margin-right: 8px; flex: none; }
.ctx-sub {
  position: absolute; right: 8px; top: 13px; border: 6px solid transparent; border-left: 7px solid #777; border-right: 0;
}
.arrows { position: absolute; left: 0; top: 0; z-index: 4; pointer-events: none; }
.a-shadow { fill: #c7381f; stroke: #c7381f; }
</style>
